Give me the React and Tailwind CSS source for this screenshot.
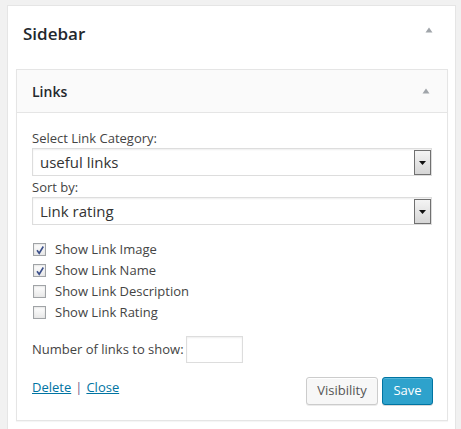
import React from "react";

const font = { fontFamily: '"Open Sans", "Noto Sans", sans-serif' };

function UpTri({ className }) {
  return (
    <svg width="8" height="6" viewBox="0 0 8 6" className={className}>
      <path d="M4 0.5 L7.5 5.5 L0.5 5.5 Z" fill="#a0a5aa" />
    </svg>
  );
}

function Select({ value }) {
  return (
    <div className="relative flex h-[28px] items-center border border-[#dddddd] bg-white pl-[7px] shadow-[inset_0_1px_2px_rgba(0,0,0,0.07)]">
      <span className="text-[15px] text-[#333333]">{value}</span>
      <div className="absolute right-0 top-px flex h-[25px] w-[17px] items-center justify-center border border-[#707070] bg-gradient-to-b from-[#f4f4f4] to-[#d6d6d6]">
        <svg width="7" height="4" viewBox="0 0 7 4">
          <path d="M0 0 H7 L3.5 4 Z" fill="#111" />
        </svg>
      </div>
    </div>
  );
}

function Check({ checked, label }) {
  return (
    <div className="flex h-[21px] items-center">
      <div className="ml-px flex h-[13px] w-[13px] items-center justify-center border border-[#a0a3a6] bg-gradient-to-b from-[#ffffff] to-[#e8e8e8] shadow-[inset_0_1px_2px_rgba(0,0,0,0.1)]">
        {checked && (
          <svg width="10" height="10" viewBox="0 0 10 10">
            <path d="M2 5.2 L4.2 8.2 L8.3 1.5" fill="none" stroke="#3b4f8a" strokeWidth="1.6" />
          </svg>
        )}
      </div>
      <span className="ml-[9px] text-[13px] text-[#444444]">{label}</span>
    </div>
  );
}

export default function App() {
  return (
    <div className="h-[429px] w-[461px] overflow-hidden bg-[#f1f1f1] pl-[7px] pt-[5px]" style={font}>
      <div className="h-[440px] w-[449px] border border-[#e5e5e5] bg-white">
        <div className="flex h-[63px] items-start justify-between pl-[15px] pr-[22px] pt-[16px]">
          <span className="text-[17px] font-semibold leading-[24px] text-[#23282d]">Sidebar</span>
          <UpTri className="mt-[5px]" />
        </div>
        <div className="ml-[8px] w-[432px] border border-[#e5e5e5] shadow-[0_1px_1px_rgba(0,0,0,0.04)]">
          <div className="flex h-[43px] items-center justify-between border-b border-[#e5e5e5] bg-[#fafafa] pl-[15px] pr-[17px]">
            <span className="text-[14px] font-semibold text-[#23282d]">Links</span>
            <UpTri />
          </div>
          <div className="px-[15px] pb-[15px] pt-[16px]">
            <div className="mb-px text-[13px] leading-[18px] text-[#444444]">Select Link Category:</div>
            <Select value="useful links" />
            <div className="mb-px mt-[2px] text-[13px] leading-[18px] text-[#444444]">Sort by:</div>
            <Select value="Link rating" />
            <div className="mt-[14px] flex flex-col">
              <Check checked label="Show Link Image" />
              <Check checked label="Show Link Name" />
              <Check label="Show Link Description" />
              <Check label="Show Link Rating" />
            </div>
            <div className="mt-[13px] flex items-center">
              <span className="text-[13px] text-[#444444]">Number of links to show:</span>
              <div className="ml-[2px] h-[27px] w-[57px] border border-[#dddddd] bg-white shadow-[inset_0_1px_2px_rgba(0,0,0,0.07)]" />
            </div>
            <div className="mt-[14px] flex items-start justify-between">
              <div className="text-[13px] leading-[20px]">
                <a className="text-[#0074a2] underline" href="#">Delete</a>
                <span className="mx-[4px] text-[#7a5a8a]">|</span>
                <a className="text-[#0074a2] underline" href="#">Close</a>
              </div>
              <div className="mr-[-1px] flex gap-[4px]">
                <button className="h-[28px] w-[72px] rounded-[3px] border border-[#cccccc] bg-[#f7f7f7] text-[13px] text-[#555555] shadow-[inset_0_1px_0_#fff,0_1px_0_rgba(0,0,0,0.08)]">Visibility</button>
                <button className="h-[28px] w-[51px] rounded-[3px] border border-[#0074a2] bg-[#2ea2cc] text-[13px] text-white shadow-[inset_0_1px_0_rgba(120,200,230,0.5),0_1px_0_rgba(0,0,0,0.15)]">Save</button>
              </div>
            </div>
          </div>
        </div>
      </div>
    </div>
  );
}
